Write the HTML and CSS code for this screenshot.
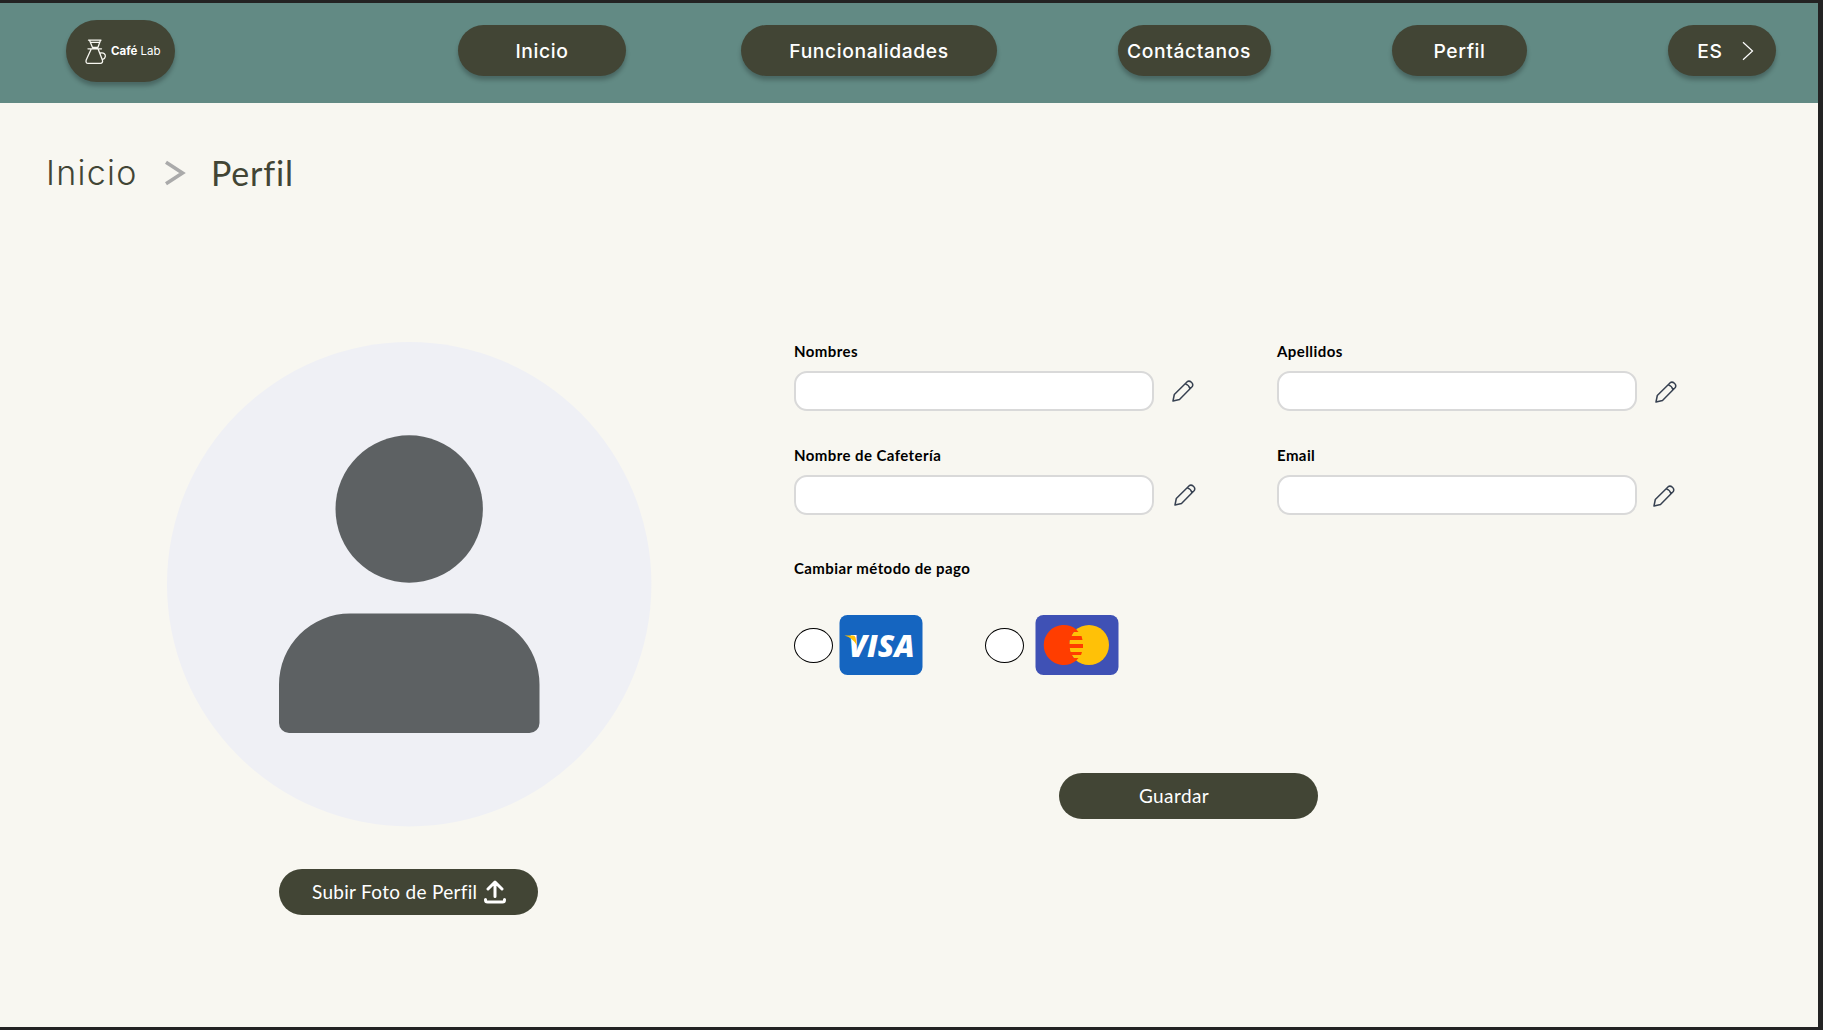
FILE: index.html
```html
<!DOCTYPE html>
<html lang="es">
<head>
<meta charset="utf-8">
<title>Café Lab - Perfil</title>
<link rel="stylesheet" href="styles.css">
</head>
<body>
<div class="page">
  <header class="topbar">
    <a class="pill logo">
      <svg width="22" height="26" viewBox="0 0 22 26" fill="none" stroke="#f8f7f1" stroke-width="1.3" stroke-linejoin="round" stroke-linecap="round">
        <path d="M3.500 1.200h12.500M4.500 1.200L7.500 8.500h5.400l2.600-7.300M5.500 3.400h9M3 9.800h13.500M6 10.500L1.200 21c-.6 2 .2 3.400 1.800 3.400h12.400c1.800 0 2.600-1.400 2-3.400L13.300 10.500M15.500 14c3.500-.8 5.200 1.600 4.800 3.600-.3 1.600-1.300 2.400-2.600 2.800"/>
      </svg>
      <span class="brand"><b>Café</b> Lab</span>
    </a>
    <a class="pill nav-home">Inicio</a>
    <a class="pill nav-features">Funcionalidades</a>
    <a class="pill nav-contact">Contáctanos</a>
    <a class="pill nav-profile">Perfil</a>
    <a class="pill nav-lang">ES
      <svg width="12" height="20" viewBox="0 0 12 20" fill="none" stroke="#fff" stroke-width="1.2"><path d="M1 1.300l9.500 8.700L1 18.700"/></svg>
    </a>
  </header>

  <nav class="crumbs">
    <span class="crumb-home">Inicio</span>
    <svg width="21" height="26" viewBox="0 0 21 26" fill="none" stroke="#aaa" stroke-width="3.600"><path d="M1 2.300L17.500 13 1 23.700"/></svg>
    <span class="crumb-current">Perfil</span>
  </nav>

  <main class="content">
    <section class="photo">
      <svg width="485" height="485" viewBox="0 0 485 485">
        <circle cx="242.200" cy="242.300" r="242.200" fill="#eff0f5"/>
        <circle cx="242.200" cy="167" r="73.700" fill="#5d6163"/>
        <path d="M183 271.500h118.500a71 71 0 0 1 71 71v38.500a10 10 0 0 1-10 10H122a10 10 0 0 1-10-10V342.500a71 71 0 0 1 71-71z" fill="#5d6163"/>
      </svg>
      <button class="action upload" type="button"><span>Subir Foto de Perfil</span>
        <svg width="22" height="24" viewBox="0 0 22 24" fill="none" stroke="#fff" stroke-width="3" stroke-linecap="round" stroke-linejoin="round"><path d="M11 16.500V3M4 9l7-7 7 7M1.500 19.500v.5q0 2 2 2h15q2 0 2-2v-.5"/></svg>
      </button>
    </section>

    <form class="details">
      <div class="fields">
        <label class="field"><span class="label">Nombres</span>
          <span class="row"><input type="text"><svg class="pencil" viewBox="0 0 22 22"><path d="M1 21l1.300-6.500L15.200 1.700q2-1.400 4.200.6t.9 4.200L7.500 19.500zM13.300 3.900q3.700 1 4.700 4.800"/></svg></span></label>
        <label class="field"><span class="label">Apellidos</span>
          <span class="row"><input type="text"><svg class="pencil low" viewBox="0 0 22 22"><path d="M1 21l1.300-6.500L15.200 1.700q2-1.400 4.200.6t.9 4.200L7.500 19.500zM13.300 3.900q3.700 1 4.700 4.800"/></svg></span></label>
        <label class="field"><span class="label">Nombre de Cafetería</span>
          <span class="row"><input type="text"><svg class="pencil far" viewBox="0 0 22 22"><path d="M1 21l1.300-6.500L15.200 1.700q2-1.400 4.200.6t.9 4.200L7.500 19.500zM13.300 3.900q3.700 1 4.700 4.800"/></svg></span></label>
        <label class="field"><span class="label">Email</span>
          <span class="row"><input type="text"><svg class="pencil low near" viewBox="0 0 22 22"><path d="M1 21l1.300-6.500L15.200 1.700q2-1.400 4.200.6t.9 4.200L7.500 19.500zM13.300 3.900q3.700 1 4.700 4.800"/></svg></span></label>
      </div>
      <h2 class="label">Cambiar método de pago</h2>
      <div class="methods">
        <span class="radio"></span>
        <svg class="visa" width="84" height="60" viewBox="0 0 84 60">
          <rect x=".5" width="83" height="60" rx="8" fill="#1565c0"/>
          <text class="visa-name" x="9.500" y="41.500" textLength="66" lengthAdjust="spacingAndGlyphs">VISA</text>
          <path d="M5.500 20.500h8.500q2 0 2.500 2l1.500 8Q14 23 5.500 20.500z" fill="#ffc107"/>
        </svg>
        <span class="radio second"></span>
        <svg class="mastercard" width="84" height="60" viewBox="0 0 84 60">
          <rect x=".5" width="83" height="60" rx="8" fill="#3f51b5"/>
          <circle cx="54" cy="30" r="20" fill="#ffc107"/>
          <path d="M41 14.200A20 20 0 1 0 41 45.800L43.500 43H38.500l-1.500-3h9l1-3H35.500l-.8-4H48v-4H34.500v-4H47.500l-1-4H36.500l2-4H43.500z" fill="#ff3d00"/>
        </svg>
      </div>
      <button class="action save" type="button"><span>Guardar</span></button>
    </form>
  </main>
</div>
</body>
</html>
```
FILE: styles.css
```css
* { box-sizing: border-box; }
body {
  margin: 0;
  background: #232323;
  font-family: Lato, sans-serif;
}
.page {
  width: 1818px;
  height: 1027px;
  border-top: 3px solid #232323;
  background: #f8f7f1;
}
.topbar {
  display: flex;
  align-items: flex-start;
  height: 100px;
  padding-left: 66px;
  background: #628a84;
}
.pill {
  display: flex;
  align-items: center;
  justify-content: center;
  flex: none;
  height: 51px;
  margin-top: 22px;
  padding-top: 2px;
  border-radius: 26px;
  background: #424535;
  color: #fff;
  font: 550 19.3px/1 Inter, sans-serif;
  letter-spacing: .6px;
  box-shadow: 0 4px 4px rgba(0, 0, 0, .25);
}
.logo {
  justify-content: flex-start;
  width: 109px;
  height: 62px;
  margin-top: 17px;
  padding-left: 19px;
  gap: 4px;
  border-radius: 31px;
}
.brand {
  font-size: 11.5px;
  font-weight: 400;
  letter-spacing: 0;
  white-space: nowrap;
}
.nav-home { width: 168px; margin-left: 283px; }
.nav-features { width: 256px; margin-left: 115px; }
.nav-contact { width: 153px; margin-left: 121px; padding-right: 11px; }
.nav-profile { width: 135px; margin-left: 121px; }
.nav-lang { width: 108px; margin-left: 141px; padding-left: 7px; gap: 19px; }
.nav-lang svg { margin-bottom: 1px; }

.crumbs {
  display: flex;
  align-items: center;
  height: 140px;
  padding-left: 46px;
  color: #424535;
  font-size: 34px;
}
.crumb-home {
  width: 119px;
  font: 300 34px/1 Inter, sans-serif;
  letter-spacing: 1.3px;
}
.crumb-current {
  margin-left: 25px;
  padding-bottom: 2px;
  letter-spacing: .8px;
}

.content { display: flex; padding: 99px 0 0 167px; }
.photo {
  display: flex;
  flex-direction: column;
  align-items: flex-start;
  width: 485px;
}
.action {
  display: flex;
  align-items: center;
  width: 259px;
  height: 46px;
  padding: 0;
  border: 0;
  border-radius: 23px;
  background: #424535;
  color: #fff;
  font: 400 19px/1 Lato, sans-serif;
  letter-spacing: .3px;
  white-space: nowrap;
}
.action span { padding-bottom: 2px; }
.upload { margin: 42px 0 0 112px; padding-left: 33px; gap: 7px; }
.details { width: 900px; margin-left: 142px; }
.fields {
  display: grid;
  grid-template-columns: 483px 417px;
  grid-auto-rows: 104px;
}
.field { display: block; }
.label {
  display: block;
  margin: 0;
  color: #000;
  font-size: 15px;
  font-weight: 700;
  line-height: 18px;
  letter-spacing: .42px;
}
h2.label { margin-top: 9px; }
.row { display: flex; align-items: flex-start; margin-top: 11px; }
.row input {
  width: 360px;
  height: 40px;
  border: 2px solid #d9d9d9;
  border-radius: 13px;
  background: #fff;
}
.pencil {
  width: 22px;
  height: 22px;
  margin: 8.500px 0 0 17.500px;
  fill: none;
  stroke: #374151;
  stroke-width: 1.5;
  stroke-linejoin: round;
}
.pencil.low { margin-top: 9.500px; }
.pencil.far { margin-left: 19.500px; }
.pencil.near { margin-left: 15.500px; }
.methods { display: flex; align-items: center; height: 60px; margin-top: 38px; }
.radio {
  width: 39px;
  height: 35px;
  border: 1px solid #000;
  border-radius: 50%;
  background: #fff;
}
.radio.second { margin-left: 62px; }
.visa { margin-left: 6px; }
.mastercard { margin-left: 11px; }
.visa-name { fill: #fff; font: italic 800 30px "Open Sans", sans-serif; }
.save { margin: 98px 0 0 265px; padding-left: 80px; letter-spacing: .4px; }
```
